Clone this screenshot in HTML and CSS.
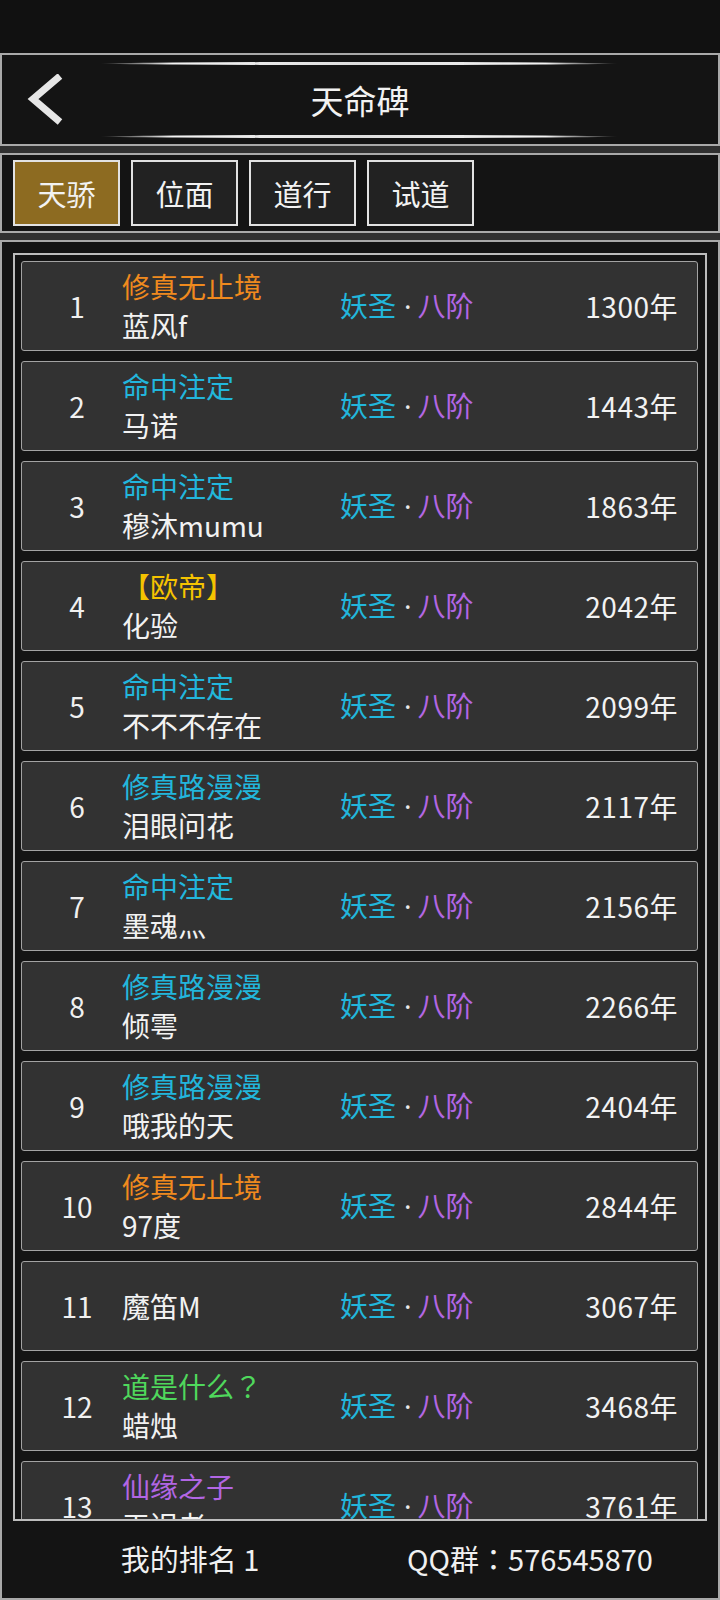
FILE: index.html
```html
<!DOCTYPE html>
<html lang="zh-CN">
<head>
<meta charset="utf-8">
<title>天命碑</title>
<link rel="stylesheet" href="styles.css">
</head>
<body>
<div class="app">
  <div class="status"></div>
  <header class="header">
    <div class="deco"></div>
    <div class="bar">
      <svg class="back" width="40" height="52" viewBox="0 0 40 52"><polyline points="33,2 6,25 33,48" fill="none" stroke="#e6e6e6" stroke-width="7"/></svg>
      <h1 class="title">天命碑</h1>
      <span></span>
    </div>
    <div class="deco"></div>
  </header>
  <div class="sep"></div>
  <nav class="tabs">
    <div class="tab active">天骄</div>
    <div class="tab">位面</div>
    <div class="tab">道行</div>
    <div class="tab">试道</div>
  </nav>
  <div class="sep"></div>
  <section class="board">
    <div class="panel">
      <div class="row"><div class="rank">1</div><div class="who"><div class="tag orange">修真无止境</div><div class="name">蓝风f</div></div><div class="tier"><span class="cyan">妖圣</span><span class="dot">·</span><span class="purple">八阶</span></div><div class="years">1300年</div></div>
      <div class="row"><div class="rank">2</div><div class="who"><div class="tag cyan">命中注定</div><div class="name">马诺</div></div><div class="tier"><span class="cyan">妖圣</span><span class="dot">·</span><span class="purple">八阶</span></div><div class="years">1443年</div></div>
      <div class="row"><div class="rank">3</div><div class="who"><div class="tag cyan">命中注定</div><div class="name">穆沐mumu</div></div><div class="tier"><span class="cyan">妖圣</span><span class="dot">·</span><span class="purple">八阶</span></div><div class="years">1863年</div></div>
      <div class="row"><div class="rank">4</div><div class="who"><div class="tag yellow">【欧帝】</div><div class="name">化验</div></div><div class="tier"><span class="cyan">妖圣</span><span class="dot">·</span><span class="purple">八阶</span></div><div class="years">2042年</div></div>
      <div class="row"><div class="rank">5</div><div class="who"><div class="tag cyan">命中注定</div><div class="name">不不不存在</div></div><div class="tier"><span class="cyan">妖圣</span><span class="dot">·</span><span class="purple">八阶</span></div><div class="years">2099年</div></div>
      <div class="row"><div class="rank">6</div><div class="who"><div class="tag cyan">修真路漫漫</div><div class="name">泪眼问花</div></div><div class="tier"><span class="cyan">妖圣</span><span class="dot">·</span><span class="purple">八阶</span></div><div class="years">2117年</div></div>
      <div class="row"><div class="rank">7</div><div class="who"><div class="tag cyan">命中注定</div><div class="name">墨魂灬</div></div><div class="tier"><span class="cyan">妖圣</span><span class="dot">·</span><span class="purple">八阶</span></div><div class="years">2156年</div></div>
      <div class="row"><div class="rank">8</div><div class="who"><div class="tag cyan">修真路漫漫</div><div class="name">倾雩</div></div><div class="tier"><span class="cyan">妖圣</span><span class="dot">·</span><span class="purple">八阶</span></div><div class="years">2266年</div></div>
      <div class="row"><div class="rank">9</div><div class="who"><div class="tag cyan">修真路漫漫</div><div class="name">哦我的天</div></div><div class="tier"><span class="cyan">妖圣</span><span class="dot">·</span><span class="purple">八阶</span></div><div class="years">2404年</div></div>
      <div class="row"><div class="rank">10</div><div class="who"><div class="tag orange">修真无止境</div><div class="name">97度</div></div><div class="tier"><span class="cyan">妖圣</span><span class="dot">·</span><span class="purple">八阶</span></div><div class="years">2844年</div></div>
      <div class="row"><div class="rank">11</div><div class="who"><div class="name">魔笛M</div></div><div class="tier"><span class="cyan">妖圣</span><span class="dot">·</span><span class="purple">八阶</span></div><div class="years">3067年</div></div>
      <div class="row"><div class="rank">12</div><div class="who"><div class="tag green">道是什么<span class="punct" lang="zh-TW">？</span></div><div class="name">蜡烛</div></div><div class="tier"><span class="cyan">妖圣</span><span class="dot">·</span><span class="purple">八阶</span></div><div class="years">3468年</div></div>
      <div class="row"><div class="rank">13</div><div class="who"><div class="tag purple">仙缘之子</div><div class="name">王迟老</div></div><div class="tier"><span class="cyan">妖圣</span><span class="dot">·</span><span class="purple">八阶</span></div><div class="years">3761年</div></div>
    </div>
    <footer class="footer">
      <div class="foot-item">我的排名 1</div>
      <div class="foot-item">QQ群<span class="punct" lang="zh-TW">：</span>576545870</div>
    </footer>
  </section>
</div>
</body>
</html>
```

FILE: styles.css
```css
* { box-sizing: border-box; }
html, body { margin: 0; padding: 0; background: #111111; }
body {
  font-family: "Noto Sans CJK SC", "Noto Sans", sans-serif;
  color: #f0f0f0;
}
.app { width: 720px; height: 1600px; display: flex; flex-direction: column; overflow: hidden; }
.status { height: 53px; background: #111111; flex: none; }

.header {
  height: 93px;
  flex: none;
  border: 2px solid #a9a9a9;
  background: #141414;
  display: flex;
  flex-direction: column;
  justify-content: space-between;
  padding: 7px 0 6px;
}
.deco {
  width: 518px;
  height: 3px;
  margin: 0 0 0 98px;
  border-radius: 50%;
  background: linear-gradient(90deg, rgba(255,255,255,0) 0%, rgba(255,255,255,0.95) 14%, #dedede 50%, rgba(255,255,255,0.95) 86%, rgba(255,255,255,0) 100%);
}
.bar {
  flex: 1;
  display: grid;
  grid-template-columns: 1fr auto 1fr;
  align-items: center;
}
.back { display: block; margin-left: 25px; }
.title {
  margin: 0;
  font-size: 33px;
  font-weight: 400;
  line-height: 40px;
  color: #f2f2f2;
}

.sep { height: 7px; flex: none; background: #303030; }

.tabs {
  height: 80px;
  flex: none;
  border: 2px solid #a9a9a9;
  background: #141414;
  display: flex;
  gap: 11px;
  padding: 5px 11px 0;
}
.tab {
  width: 107px;
  height: 66px;
  border: 2px solid #e2e2e2;
  background: #222222;
  display: flex;
  align-items: center;
  justify-content: center;
  font-size: 29px;
  color: #f2f2f2;
}
.tab.active { background: #8d6b21; }

.board {
  flex: 1;
  border: 2px solid #a9a9a9;
  background: #141414;
  display: flex;
  flex-direction: column;
}
.panel {
  height: 1268px;
  flex: none;
  margin: 11px 11px 0;
  border: 2px solid #bdbdbd;
  padding: 6px 7px 0 6px;
  display: flex;
  flex-direction: column;
  gap: 10px;
  overflow: hidden;
}
.row {
  height: 90px;
  flex: none;
  border: 1px solid #a3a3a3;
  border-radius: 3px;
  background: #323232;
  display: grid;
  grid-template-columns: 100px 218px 1fr auto;
  align-items: center;
  padding-right: 19px;
  font-size: 28px;
  line-height: 39px;
}
.rank { padding: 1px 0 0 10px; text-align: center; color: #f0f0f0; }
.who { display: flex; flex-direction: column; justify-content: center; }
.tag, .name { white-space: nowrap; }
.name { color: #f2f2f2; }
.tier { white-space: nowrap; }
.dot { font-family: "Noto Sans", "DejaVu Sans", sans-serif; color: #e8e8e8; padding: 0 6px 0 8px; }
.years { text-align: right; color: #f2f2f2; letter-spacing: 0.5px; }
.punct { font-family: "Noto Sans CJK TC", "Noto Sans CJK SC", sans-serif; }

.orange { color: #f08a1e; }
.cyan { color: #22b6dc; }
.purple { color: #b266e4; }
.yellow { color: #f5c300; }
.green { color: #4fd85c; }

.footer {
  flex: 1;
  display: grid;
  grid-template-columns: 1fr 1fr;
  align-items: center;
  padding: 0 18px 4px;
  font-size: 29px;
  color: #f0f0f0;
}
.foot-item { text-align: center; white-space: nowrap; }
```
